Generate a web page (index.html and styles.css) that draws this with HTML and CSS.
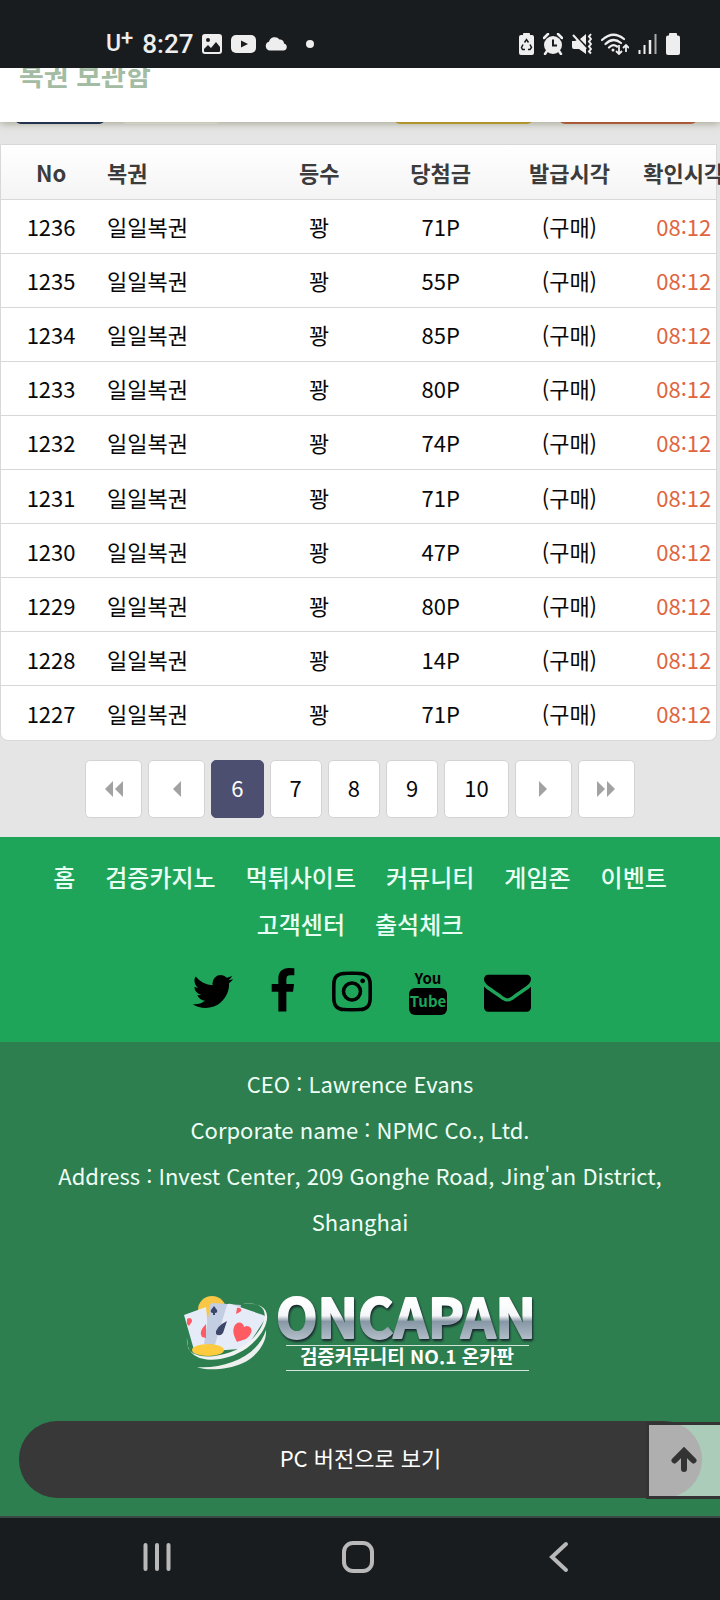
FILE: index.html
```html
<!DOCTYPE html>
<html lang="ko">
<head>
<meta charset="utf-8">
<meta name="viewport" content="width=device-width, initial-scale=1">
<title>복권 보관함</title>
<link rel="stylesheet" href="styles.css">
</head>
<body>
<div class="status">
  <div class="status-left">
    <span class="carrier">U<sup>+</sup></span>
    <span class="clock">8:27</span>
    <svg class="s-image" width="20" height="20" viewBox="0 0 20 20"><rect width="20" height="20" rx="3" fill="#eee"/><circle cx="6" cy="6" r="2" fill="#191c1f"/><path d="M2 15l4-4 3 3 5-6 4 5v4q0 1-1 1H3q-1 0-1-1z" fill="#191c1f"/></svg>
    <svg class="s-video" width="25" height="18" viewBox="0 0 25 18"><rect width="25" height="18" rx="5" fill="#eee"/><path d="M10 5.500l7 3.500-7 3.500z" fill="#191c1f"/></svg>
    <svg class="s-cloud" width="24" height="14" viewBox="0 0 24 14"><path d="M5 13.500a4.500 4.500 0 0 1-1-8.800 6 6 0 0 1 10.500-2.200 4 4 0 0 1 4.500 4 3.600 3.600 0 0 1 0 7z" fill="#eee"/></svg>
    <svg class="s-dot" width="8" height="8" viewBox="0 0 8 8"><circle cx="4" cy="4" r="4" fill="#eee"/></svg>
  </div>
  <div class="status-right">
    <svg width="15" height="22" viewBox="0 0 15 22"><path d="M4 2V1q0-1 1-1h5q1 0 1 1v1h2q2 0 2 2v16q0 2-2 2H2q-2 0-2-2V4q0-2 2-2z" fill="#eee"/><path d="M5.500 9.500l2-3 2 3M11 11.500l1.500 3-1.500 2H9M6 16.500H3.500L2.500 14.500l1.500-3" fill="none" stroke="#191c1f" stroke-width="1.500"/></svg>
    <svg width="20" height="22" viewBox="0 0 20 22"><circle cx="10" cy="12" r="9" fill="#eee"/><path d="M1 5l4-4M19 5l-4-4M4 18l-2 3M16 18l2 3" stroke="#eee" stroke-width="2.500" stroke-linecap="round"/><path d="M10 6.500v6h4" fill="none" stroke="#191c1f" stroke-width="2"/></svg>
    <svg width="20" height="22" viewBox="0 0 20 22"><path d="M0 8h3l2-1L14 16v5l-7-5H2q-2 0-2-2zM8 6l6-5v11z" fill="#eee"/><path d="M1 2l13 14" stroke="#eee" stroke-width="2"/><path d="M19 1l-2 2.500 2 2.500-2 2.500 2 2.500-2 2.500 2 2.500-2 2.500 2 2" fill="none" stroke="#eee" stroke-width="2"/></svg>
    <svg width="28" height="22" viewBox="0 0 28 22"><path d="M1 7Q12-3 23 6M4.500 11Q12 3.500 20 10M8 14.500q4-4 8-1" fill="none" stroke="#eee" stroke-width="2.200" stroke-linecap="round"/><circle cx="12" cy="17" r="1.500" fill="#eee"/><path d="M18 12v9m-3-3l3 3 3-3M25 19v-7m-3 3l3-3 3 3" fill="none" stroke="#eee" stroke-width="1.800"/></svg>
    <svg width="19" height="20" viewBox="0 0 19 20"><path d="M1.500 20v-4M6.500 20v-9" stroke="#eee" stroke-width="2"/><path d="M12 20V6" stroke="#eee" stroke-width="2.500"/><path d="M17.500 20V0" stroke="#aaa" stroke-width="2"/></svg>
    <svg width="14" height="22" viewBox="0 0 14 22"><path d="M3 2.500V1q0-1 1-1h6q1 0 1 1v1.500h1q2 0 2 2V20q0 2-2 2H2q-2 0-2-2V4.500q0-2 2-2z" fill="#eee"/></svg>
  </div>
</div>

<header class="page-head"><h1>복권 보관함</h1></header>

<main class="content">
  <div class="tabs"><i class="tab navy"></i><i class="tab pale"></i><i class="tab gold"></i><i class="tab red"></i></div>
  <div class="card">
    <table class="lots">
      <colgroup><col class="c-no"><col class="c-name"><col class="c-rank"><col class="c-prize"><col class="c-issue"><col class="c-check"></colgroup>
      <thead><tr><th>No</th><th class="name">복권</th><th>등수</th><th>당첨금</th><th>발급시각</th><th class="check"><span>확인시각</span></th></tr></thead>
      <tbody>
        <tr><td>1236</td><td class="name">일일복권</td><td>꽝</td><td>71P</td><td>(구매)</td><td class="check"><span>08:12</span></td></tr>
        <tr><td>1235</td><td class="name">일일복권</td><td>꽝</td><td>55P</td><td>(구매)</td><td class="check"><span>08:12</span></td></tr>
        <tr><td>1234</td><td class="name">일일복권</td><td>꽝</td><td>85P</td><td>(구매)</td><td class="check"><span>08:12</span></td></tr>
        <tr><td>1233</td><td class="name">일일복권</td><td>꽝</td><td>80P</td><td>(구매)</td><td class="check"><span>08:12</span></td></tr>
        <tr><td>1232</td><td class="name">일일복권</td><td>꽝</td><td>74P</td><td>(구매)</td><td class="check"><span>08:12</span></td></tr>
        <tr><td>1231</td><td class="name">일일복권</td><td>꽝</td><td>71P</td><td>(구매)</td><td class="check"><span>08:12</span></td></tr>
        <tr><td>1230</td><td class="name">일일복권</td><td>꽝</td><td>47P</td><td>(구매)</td><td class="check"><span>08:12</span></td></tr>
        <tr><td>1229</td><td class="name">일일복권</td><td>꽝</td><td>80P</td><td>(구매)</td><td class="check"><span>08:12</span></td></tr>
        <tr><td>1228</td><td class="name">일일복권</td><td>꽝</td><td>14P</td><td>(구매)</td><td class="check"><span>08:12</span></td></tr>
        <tr><td>1227</td><td class="name">일일복권</td><td>꽝</td><td>71P</td><td>(구매)</td><td class="check"><span>08:12</span></td></tr>
      </tbody>
    </table>
  </div>
  <nav class="pages" aria-label="페이지">
    <a class="arrow" href="#" aria-label="처음"><svg width="18" height="16" viewBox="0 0 18 16"><path d="M8 0v16L0 8zM18 0v16L10 8z"/></svg></a>
    <a class="arrow" href="#" aria-label="이전"><svg width="8" height="16" viewBox="0 0 8 16"><path d="M8 0v16L0 8z"/></svg></a>
    <a class="on" href="#" aria-current="page">6</a>
    <a href="#">7</a>
    <a href="#">8</a>
    <a href="#">9</a>
    <a href="#">10</a>
    <a class="arrow" href="#" aria-label="다음"><svg width="8" height="16" viewBox="0 0 8 16"><path d="M0 0v16L8 8z"/></svg></a>
    <a class="arrow" href="#" aria-label="마지막"><svg width="18" height="16" viewBox="0 0 18 16"><path d="M0 0v16L8 8zM10 0v16L18 8z"/></svg></a>
  </nav>
</main>

<section class="links">
  <nav class="menu">
    <a href="#">홈</a><a href="#">검증카지노</a><a href="#">먹튀사이트</a><a href="#">커뮤니티</a><a href="#">게임존</a><a href="#">이벤트</a><a href="#">고객센터</a><a href="#">출석체크</a>
  </nav>
  <div class="social">
    <a href="#" aria-label="Twitter"><svg width="42" height="47" viewBox="77 0 1638 1792"><path d="M1684 408q-67 98-162 167 1 14 1 42 0 130-38 259.500t-115.500 248.500-184.500 210.500-258 146-323 54.500q-271 0-496-145 35 4 78 4 225 0 401-138-105-2-188-64.500t-114-159.500q33 5 61 5 43 0 85-11-112-23-185.500-111.500t-73.500-205.500v-4q68 38 146 41-66-44-105-115t-39-154q0-88 44-163 121 149 294.500 238.500t371.500 99.500q-8-38-8-74 0-134 94.500-228.500t228.500-94.500q140 0 236 102 109-21 205-78-37 115-142 178 93-10 186-50z"/></svg></a>
    <a href="#" aria-label="Facebook"><svg width="24" height="47" viewBox="453 0 916 1792"><path d="M1343 12v264h-157q-86 0-116 36t-30 108v189h293l-39 296h-254v759h-306v-759h-255v-296h255v-218q0-186 104-288.500t277-102.500q147 0 228 12z"/></svg></a>
    <a href="#" aria-label="Instagram"><svg width="40" height="47" viewBox="128 0 1536 1792"><path d="M1152 896q0-106-75-181t-181-75-181 75-75 181 75 181 181 75 181-75 75-181zm138 0q0 164-115 279t-279 115-279-115-115-279 115-279 279-115 279 115 115 279zm108-410q0 38-27 65t-65 27-65-27-27-65 27-65 65-27 65 27 27 65zm-502-220q-7 0-76.500-.5t-105.500 0-96.500 3-103 10-71.500 18.500q-50 20-88 58t-58 88q-11 29-18.500 71.500t-10 103-3 96.500 0 105.500.5 76.500-.5 76.500 0 105.500 3 96.500 10 103 18.500 71.500q20 50 58 88t88 58q29 11 71.500 18.500t103 10 96.500 3 105.500 0 76.500-.5 76.500.5 105.500 0 96.500-3 103-10 71.500-18.500q50-20 88-58t58-88q11-29 18.500-71.500t10-103 3-96.500 0-105.500-.5-76.500.5-76.500 0-105.500-3-96.500-10-103-18.500-71.500q-20-50-58-88t-88-58q-29-11-71.500-18.500t-103-10-96.500-3-105.500 0-76.500.5zm768 630q0 229-5 317-10 208-124 322t-322 124q-88 5-317 5t-317-5q-208-10-322-124t-124-322q-5-88-5-317t5-317q10-208 124-322t322-124q88-5 317-5t317 5q208 10 322 124t124 322q5 88 5 317z"/></svg></a>
    <a href="#" aria-label="YouTube"><svg width="38" height="47" viewBox="0 0 38 47"><rect y="20" width="38" height="27" rx="6"/><text class="yt" x="19" y="16">You</text><text class="yt cut" x="19" y="39">Tube</text></svg></a>
    <a href="#" aria-label="Email"><svg width="47" height="47" viewBox="0 0 1792 1792"><path d="M1792 710v794q0 66-47 113t-113 47h-1472q-66 0-113-47t-47-113v-794q44 49 101 87 362 246 497 345 57 42 92.500 65.500t94.500 48 110 24.500h2q51 0 110-24.500t94.500-48 92.500-65.500q170-123 498-345 57-39 100-87zm0-294q0 79-49 151t-122 123q-376 261-468 325-10 7-42.500 31t-54 38.500-52 32.500-57.500 27-50 9h-2q-23 0-50-9t-57.500-27-52-32.500-54-38.500-42.500-31q-91-64-262-182.500t-205-142.500q-62-42-117-115.500t-55-136.500q0-78 41.500-130t118.500-52h1472q65 0 112.500 47t47.500 113z"/></svg></a>
  </div>
</section>

<footer class="foot">
  <p>CEO : Lawrence Evans</p>
  <p>Corporate name : NPMC Co., Ltd.</p>
  <p>Address : Invest Center, 209 Gonghe Road, Jing'an District, Shanghai</p>
  <svg class="logo" width="360" height="84" viewBox="0 0 360 84" role="img" aria-label="ONCAPAN">
    <defs>
      <linearGradient id="steel" x1="0" y1="6" x2="0" y2="50" gradientUnits="userSpaceOnUse"><stop offset="0.1" stop-color="#fff"/><stop offset="0.45" stop-color="#f4f6f8"/><stop offset="0.58" stop-color="#8797a5"/><stop offset="1" stop-color="#b4c0ca"/></linearGradient>
    </defs>
    <circle cx="32" cy="20" r="14" fill="#f9c646"/>
    <path d="M4 25l22-8 4 40-16 3z" fill="#e6ebf8"/>
    <path d="M30 16q0-3 3-3l28 2-8 42-29-3z" fill="#c3cee3"/>
    <path d="M47 15q1-2 4-1l32 11q3 1 2 4L69 54q-4 5-10 5l-26 2z" fill="#e6ebf8"/>
    <path d="M7 29c3-3 7 1 4 4l-2 3-2-2zM57 18c3-1 6 2 3 4l-4 2zM26 34q-8 8-4 13l4 1z" fill="#ff5b63"/>
    <path d="M34 16l3 4q1 3-2 3v2h-2v-2q-3 0-2-3zM47 31q-12 6-11 13 4 3 7-1z" fill="#3c4668"/>
    <path d="M54 37c2-6 9-6 10 0 5-3 9 2 7 6-3 7-9 7-14 9-2-5-5-9-3-15z" fill="#ff5b63"/>
    <ellipse cx="28" cy="60" rx="16" ry="6" fill="#ffcb3e"/>
    <path d="M63 14c30-4 25 20 8 36C51 68 15 72 8 58L7 48C5 74 41 76 67 58 91 40 98 10 63 14z" fill="#f1f3f2"/>
    <path d="M86 40c-8 26-40 39-69 37 9 4 31 3 46-4 14-7 24-20 23-33z" fill="#edf0ef"/>
    <text class="brand" x="226" y="48">ONCAPAN</text>
    <path d="M106 55.500h243M106 80.500h243" stroke="#d4e5dc" stroke-width="1"/>
    <text class="slogan" x="227" y="74">검증커뮤니티 NO.1 온카판</text>
  </svg>
  <div class="actions">
    <button class="pc" type="button">PC 버전으로 보기</button>
    <button class="top" type="button" aria-label="맨 위로"><svg width="26" height="26" viewBox="0 0 26 26"><path d="M13 22V5M3.500 13.500L13 4l9.500 9.500" fill="none" stroke="#333" stroke-width="6" stroke-linecap="round"/></svg></button>
  </div>
</footer>

<nav class="sysbar">
  <button type="button" aria-label="최근 앱"><svg width="32" height="32" viewBox="0 0 32 32"><path d="M4.500 4v24M16 4v24M27.500 4v24"/></svg></button>
  <button type="button" aria-label="홈 화면"><svg width="32" height="32" viewBox="0 0 32 32"><rect x="2" y="2" width="28" height="28" rx="9"/></svg></button>
  <button type="button" aria-label="뒤로"><svg width="32" height="32" viewBox="0 0 32 32"><path d="M23 3L9 16l14 13"/></svg></button>
</nav>
</body>
</html>
```

FILE: styles.css
```css
* { box-sizing: border-box; }
body {
  margin: 0;
  background: #e5e5e5;
  color: #080808;
  font: 22px/32px "Noto Sans CJK KR", "Noto Sans", sans-serif;
  overflow-x: hidden;
}
a { color: inherit; text-decoration: none; }
svg { display: block; }
button { font: inherit; cursor: pointer; }

.status {
  position: relative;
  z-index: 3;
  display: flex;
  justify-content: space-between;
  align-items: center;
  height: 68px;
  padding: 19px 40px 0 106px;
  background: #191c1f;
  color: #eee;
  font-family: Roboto, sans-serif;
}
.status-left, .status-right { display: flex; align-items: center; }
.status-left { gap: 9px; }
.status-right { gap: 9px; }
.carrier { font-size: 23px; font-weight: 500; }
.carrier sup { font-size: 22px; line-height: 0; vertical-align: 6px; }
.clock { font-size: 26px; font-weight: 500; }
.s-dot { margin-left: 8px; }

.page-head {
  position: relative;
  z-index: 2;
  height: 54px;
  padding-left: 19px;
  background: #fff;
  box-shadow: 0 1px 8px rgba(90, 90, 50, .5);
}
.page-head h1 {
  margin: 0;
  color: #a3bca3;
  font-size: 27px;
  font-weight: 700;
  line-height: 14px;
}

.tabs {
  display: flex;
  align-items: flex-end;
  height: 2px;
  padding: 0 23px 0 15px;
  overflow: hidden;
}
.tab { height: 20px; border-radius: 6px; flex: 90 1 0; }
.navy { background: #10265c; }
.pale { background: #f3f3ef; margin-left: 16px; flex-grow: 100; }
.gold { background: #cfa92c; margin-left: 173px; flex-grow: 138; }
.red { background: #c65c3c; margin-left: 26px; flex-grow: 138; }

.card {
  margin: 20px 3px 0 0;
  border: 1px solid #d8d8d8;
  border-radius: 0 0 8px 8px;
  background: #fff;
}
.lots {
  width: 100%;
  height: 595px;
  border-collapse: collapse;
  table-layout: fixed;
  white-space: nowrap;
}
.c-no { width: 14%; }
.c-name { width: 20%; }
.c-rank { width: 21%; }
.c-prize { width: 13%; }
.c-issue { width: 23%; }
.c-check { width: 9%; }
.lots th, .lots td { height: 54px; padding: 0; text-align: center; }
.lots th { color: #3c3c3c; font-weight: 700; }
.lots thead { background: linear-gradient(#fff, #f4f4f4); }
.lots tbody tr { border-top: 1px solid #d8d8d8; }
.lots .name { padding-left: 6px; text-align: left; }
.check span { display: flex; justify-content: center; }
td.check { color: #e0653f; }

.pages { display: flex; justify-content: center; gap: 6px; padding: 19px 0; }
.pages a {
  display: flex;
  align-items: center;
  justify-content: center;
  height: 58px;
  padding: 0 19px 4px;
  border: 1px solid #d3d3d3;
  border-radius: 5px;
  background: #fff;
}
.pages .arrow { width: 57px; padding-bottom: 0; }
.pages svg { fill: #a2a2a2; flex: none; }
.pages .on { background: #4d4f70; border-color: #4d4f70; color: #fff; }

.links { padding: 16px 20px 27px; background: #1fa559; color: #e9fff4; }
.menu {
  display: flex;
  flex-wrap: wrap;
  justify-content: center;
  column-gap: 30px;
  font-size: 24px;
  font-weight: 500;
  line-height: 47px;
}
.social { display: flex; justify-content: center; gap: 37px; margin: 21px 0 0 2px; }
.yt { font-size: 15px; font-weight: 700; text-anchor: middle; }
.yt.cut { fill: #1fa559; }

.foot { padding: 18px 0; background: #2d7f50; color: #f0fff6; text-align: center; }
.foot p { margin: 0; padding: 0 40px; line-height: 46px; }
.logo { margin: 46px auto 47px; }
.brand {
  fill: url(#steel);
  stroke: url(#steel);
  stroke-width: 2px;
  stroke-linejoin: round;
  font-size: 54px;
  font-weight: 700;
  text-anchor: middle;
  filter: drop-shadow(1px 2px 1px #17262b);
}
.slogan { fill: #fff; font-size: 19px; font-weight: 700; text-anchor: middle; }

.actions { position: relative; padding: 0 18px 0 19px; }
.pc {
  display: block;
  width: 100%;
  height: 77px;
  padding: 0 0 6px;
  border: 0;
  border-radius: 38px;
  background: #383838;
  color: #fff;
}
.top {
  position: absolute;
  top: 1px;
  right: 0;
  display: flex;
  align-items: center;
  width: 74px;
  height: 77px;
  padding: 0 0 2px 22px;
  border: 3px solid #333;
  border-right: 0;
  background: rgba(255, 255, 255, .6);
}

.sysbar {
  display: flex;
  justify-content: space-between;
  align-items: center;
  height: 84px;
  padding: 0 145px 4px 141px;
  border-top: 2px solid #3a4846;
  background: #191c1f;
}
.sysbar button { padding: 0; border: 0; background: none; }
.sysbar svg { fill: none; stroke: #b9b9b9; stroke-width: 4px; stroke-linecap: round; }
```
